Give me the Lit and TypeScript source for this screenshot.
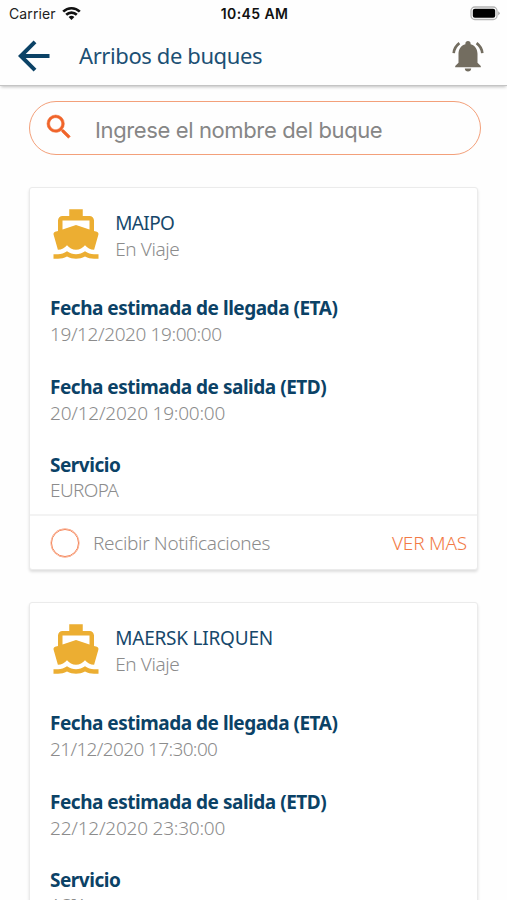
import { LitElement, html, css, svg } from "lit";
import { customElement, property } from "lit/decorators.js";

interface Vessel {
  name: string;
  status: string;
  fields: { label: string; value: string; labelFit: string; valueFit: string }[];
  nameFit: string;
}

const vessels: Vessel[] = [
  {
    name: "MAIPO",
    status: "En Viaje",
    nameFit: "tight",
    fields: [
      { label: "Fecha estimada de llegada (ETA)", value: "19/12/2020 19:00:00", labelFit: "snug", valueFit: "snug" },
      { label: "Fecha estimada de salida (ETD)", value: "20/12/2020 19:00:00", labelFit: "snug", valueFit: "loose" },
      { label: "Servicio", value: "EUROPA", labelFit: "snug", valueFit: "tight" },
    ],
  },
  {
    name: "MAERSK LIRQUEN",
    status: "En Viaje",
    nameFit: "loose",
    fields: [
      { label: "Fecha estimada de llegada (ETA)", value: "21/12/2020 17:30:00", labelFit: "snug", valueFit: "tight" },
      { label: "Fecha estimada de salida (ETD)", value: "22/12/2020 23:30:00", labelFit: "snug", valueFit: "loose" },
      { label: "Servicio", value: "ASIA", labelFit: "snug", valueFit: "tight" },
    ],
  },
];

const boat = svg`<path d="M20 21c-1.39 0-2.78-.47-4-1.32-2.44 1.71-5.56 1.71-8 0C6.78 20.53 5.39 21 4 21H2v2h2c1.38 0 2.74-.35 4-.99 2.52 1.29 5.48 1.29 8 0 1.26.65 2.62.99 4 .99h2v-2h-2zM3.95 19H4c1.6 0 3.02-.88 4-2 .98 1.12 2.4 2 4 2s3.02-.88 4-2c.98 1.12 2.4 2 4 2h.05l1.89-6.68c.08-.26.06-.54-.06-.78s-.34-.42-.6-.5L20 10.62V6c0-1.1-.9-2-2-2h-3V1H9v3H6c-1.1 0-2 .9-2 2v4.62l-1.29.42c-.26.08-.48.26-.6.5s-.15.52-.06.78L3.95 19zM6 6h12v3.97L12 8 6 9.97V6z"/>`;

@customElement("vessel-card")
export class VesselCard extends LitElement {
  @property({ attribute: false }) vessel!: Vessel;

  static styles = css`
    :host {
      display: block;
      box-sizing: border-box;
      height: 383px;
      border: 1px solid #ebebeb;
      border-radius: 3px;
      background: #fff;
      box-shadow: 0 2px 3px rgba(0, 0, 0, 0.13);
      font-family: "Noto Sans", sans-serif;
      white-space: nowrap;
    }
    .body { box-sizing: border-box; height: 326px; padding: 19px 20px 0; }
    .head { display: flex; align-items: flex-start; height: 89px; }
    .boat { width: 54px; height: 54px; fill: #ecae32; margin-left: -0.8px; }
    .titles { margin: 3px 0 0 12px; }
    .name { font-size: 19px; line-height: 26px; color: #16486b; }
    .status, .value { font-size: 19px; line-height: 26px; font-weight: 300; color: #8c8c8c; }
    .field { height: 78.5px; }
    .label { font-size: 19px; line-height: 25px; font-weight: 700; color: #0b4266; }
    .field:last-child .value { margin-top: -1px; }
    .snug { letter-spacing: -0.48px; }
    .value .snug, .trip { letter-spacing: -0.4px; }
    .tight { letter-spacing: -0.63px; }
    .loose { letter-spacing: -0.22px; }
    .foot {
      box-sizing: border-box;
      height: 55px;
      border-top: 2px solid #f3f3f3;
      padding: 0 10px 0 21px;
      display: flex;
      align-items: center;
      font-size: 19px;
      font-weight: 300;
      letter-spacing: -0.34px;
      color: #8c8c8c;
    }
    .radio { box-sizing: border-box; width: 28px; height: 28px; border: 1.5px solid #f58558; border-radius: 50%; margin-right: 14px; box-shadow: 0 0 0 0.4px #f58558; }
    .more { margin-left: auto; letter-spacing: -0.2px; color: #f27a45; }
  `;

  render() {
    const v = this.vessel;
    return html`
      <div class="body">
        <div class="head">
          <svg class="boat" viewBox="0 0 24 24">${boat}</svg>
          <div class="titles">
            <div class="name"><span class=${v.nameFit}>${v.name}</span></div>
            <div class="status"><span class="trip">${v.status}</span></div>
          </div>
        </div>
        ${v.fields.map(
          (f) => html`<div class="field">
            <div class="label"><span class=${f.labelFit}>${f.label}</span></div>
            <div class="value"><span class=${f.valueFit}>${f.value}</span></div>
          </div>`
        )}
      </div>
      <div class="foot">
        <span class="radio"></span>
        <span class="notify">Recibir Notificaciones</span>
        <span class="more">VER MAS</span>
      </div>
    `;
  }
}

@customElement("app-root")
export class AppRoot extends LitElement {
  static styles = css`
    :host { display: block; height: 900px; overflow: hidden; background: #fefefe; font-family: "Noto Sans", sans-serif; white-space: nowrap; }
    .statusbar {
      display: grid;
      grid-template-columns: 1fr auto 1fr;
      align-items: center;
      box-sizing: border-box;
      height: 28px;
      padding: 0 7px 2px 9px;
      font-family: Inter, sans-serif;
      font-size: 14px;
      color: #222;
    }
    .carrier { display: flex; align-items: center; gap: 6px; letter-spacing: 0.1px; }
    .time { font-weight: 600; color: #111; letter-spacing: 0.4px; }
    .battery { justify-self: end; width: 30px; height: 15px; }
    .wifi { width: 19px; height: 15px; }
    .toolbar {
      box-sizing: border-box;
      height: 58px;
      display: flex;
      align-items: center;
      padding: 0 22px 2px 18px;
      border-bottom: 1px solid #c4c4c4;
      box-shadow: 0 2px 3px -1px rgba(0, 0, 0, 0.25);
    }
    .back { width: 32px; height: 32px; }
    .title { margin: -1px 0 0 29px; font-size: 22px; letter-spacing: -0.4px; color: #1c5074; }
    .bell { margin-left: auto; width: 34px; height: 34px; }
    .search {
      box-sizing: border-box;
      height: 54px;
      margin: 15px 26px 0 29px;
      border: 1.5px solid #f3a07a;
      border-radius: 27px;
      display: flex;
      align-items: center;
      padding-left: 13px;
    }
    .lens { width: 32px; height: 32px; fill: #f0642a; stroke: #f0642a; stroke-width: 0.4; margin-top: -2px; }
    .hint { margin: 3px 0 0 20px; font-family: Inter, sans-serif; font-size: 22px; letter-spacing: -0.38px; color: #868686; }
    .list { display: flex; flex-direction: column; gap: 32px; margin: 32px 29px 0; }
  `;

  render() {
    return html`
      <div class="statusbar">
        <div class="carrier">
          <span>Carrier</span>
          <svg class="wifi" viewBox="0 0 19 15" fill="none" stroke="#111" stroke-width="2.6">
            <path d="M1.2 5.6a11.8 11.8 0 0 1 16.6 0M4.2 8.8a7.6 7.6 0 0 1 10.6 0" />
            <path d="M9.5 14l-2.9-2.9a4.2 4.2 0 0 1 5.8 0z" fill="#111" stroke="none" />
          </svg>
        </div>
        <div class="time">10:45 AM</div>
        <svg class="battery" viewBox="0 0 30 15">
          <rect x="1" y="1" width="26" height="12.5" rx="3.8" fill="#fff" stroke="#b4b4b4" stroke-width="1.3" />
          <rect x="2.8" y="2.8" width="22.4" height="9" rx="2" />
          <path d="M28.2 5.2q3 2 0 4.2z" fill="#aaa" />
        </svg>
      </div>
      <div class="toolbar">
        <svg class="back" viewBox="0 0 32 32" fill="none" stroke="#0b4266" stroke-width="4">
          <path d="M31.5 16H3M17 1.8L2.8 16L17 30.2" />
        </svg>
        <span class="title">Arribos de buques</span>
        <svg class="bell" viewBox="0 0 34 34" fill="#736d60">
          <path d="M17 2c1.6 0 2.6 1.1 2.6 2.4v.8c4.4 1.2 6.9 4.9 6.9 9.6v9l3.3 3.2v1.3H4.2v-1.3l3.3-3.2v-9c0-4.7 2.5-8.4 6.9-9.6v-.8C14.4 3.1 15.4 2 17 2zM13.8 29.6h6.4c0 1.7-1.4 3-3.2 3s-3.2-1.3-3.2-3z" />
          <path d="M2.7 14.2c.3-4.3 2.3-7.5 5.7-10.1M31.3 14.2c-.3-4.3-2.3-7.5-5.7-10.1" fill="none" stroke="#736d60" stroke-width="2.6" />
        </svg>
      </div>
      <div class="search">
        <svg class="lens" viewBox="0 0 24 24">
          <path d="M15.5 14h-.79l-.28-.27A6.471 6.471 0 0 0 16 9.5 6.5 6.5 0 1 0 9.5 16c1.61 0 3.09-.59 4.23-1.57l.27.28v.79l5 4.99L20.49 19l-4.99-5zm-6 0C7.01 14 5 11.99 5 9.5S7.01 5 9.5 5 14 7.01 14 9.5 11.99 14 9.5 14z" />
        </svg>
        <span class="hint">Ingrese el nombre del buque</span>
      </div>
      <div class="list">${vessels.map((v) => html`<vessel-card .vessel=${v}></vessel-card>`)}</div>
    `;
  }
}
